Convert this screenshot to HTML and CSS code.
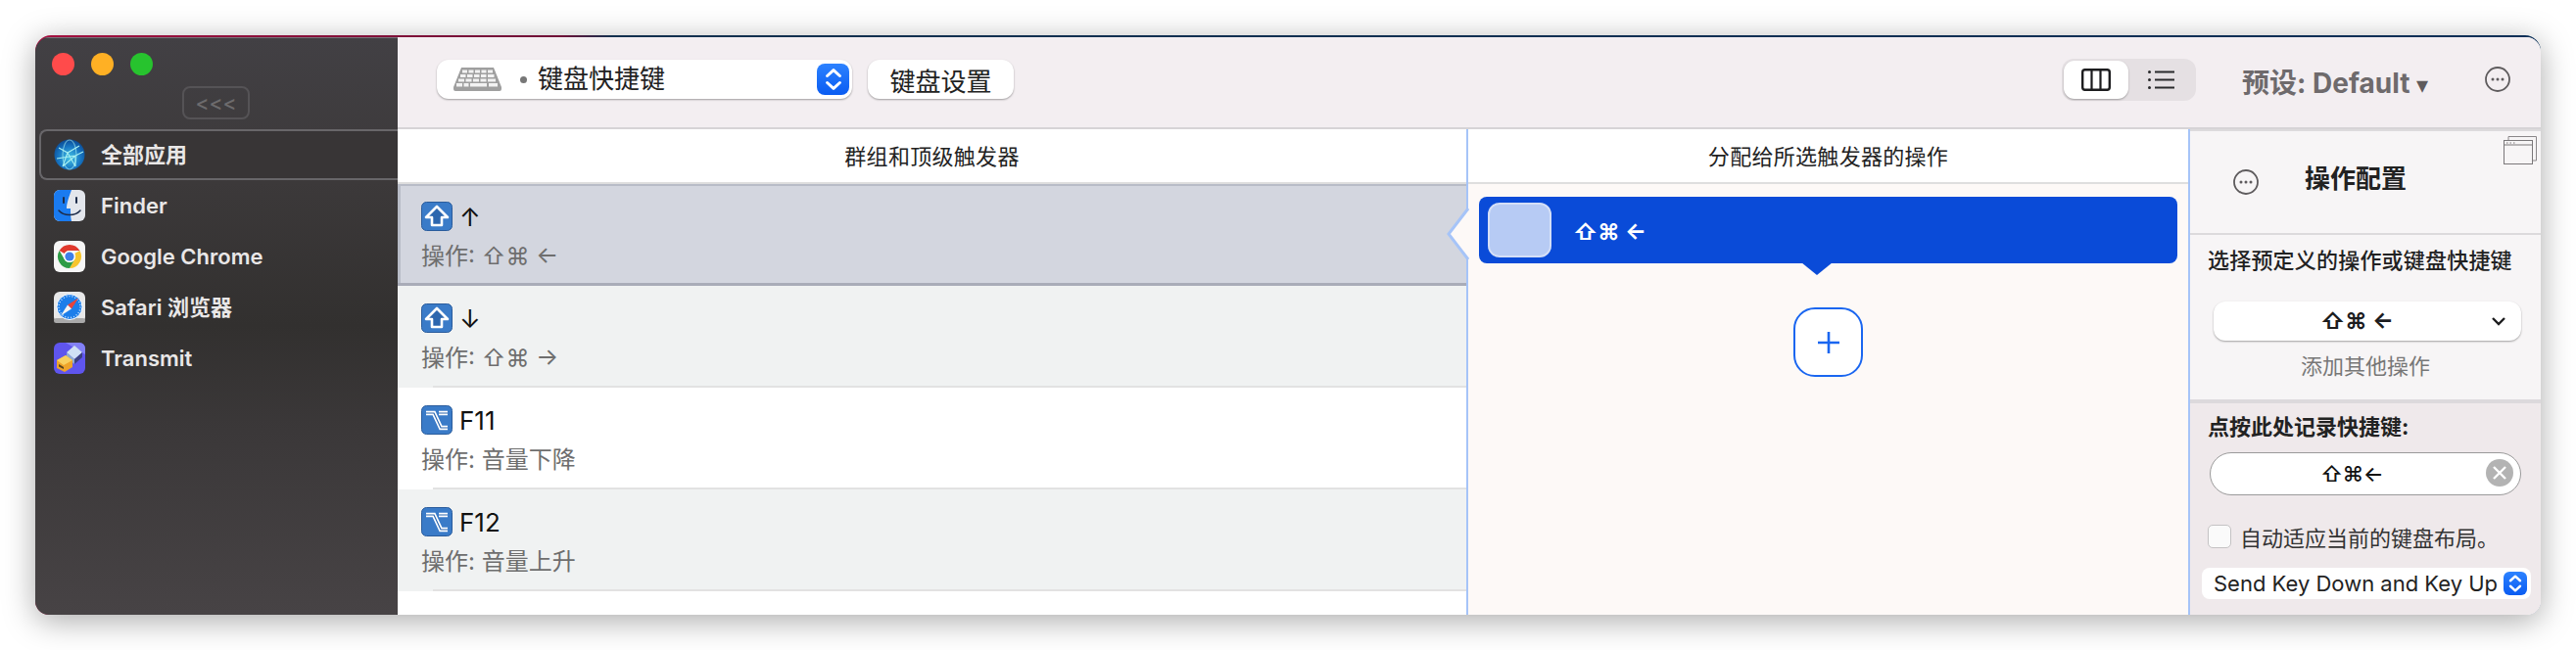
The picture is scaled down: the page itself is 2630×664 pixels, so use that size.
FILE: index.html
```html
<!DOCTYPE html>
<html lang="zh">
<head>
<meta charset="utf-8">
<title>键盘快捷键</title>
<link rel="stylesheet" href="styles.css">
</head>
<body>
<svg class="defs" width="0" height="0" aria-hidden="true">
  <defs>
    <radialGradient id="globeFill" cx="50%" cy="60%" r="60%"><stop offset="0" stop-color="#46c4e4"/><stop offset="0.6" stop-color="#1878c4"/><stop offset="1" stop-color="#0b4a94"/></radialGradient>
    <symbol id="dots" viewBox="0 0 26 26">
      <circle cx="13" cy="13" r="12" fill="none" stroke="#5e5b5d" stroke-width="1.800"/>
      <circle cx="8" cy="13" r="1.500" fill="#5e5b5d"/><circle cx="13" cy="13" r="1.500" fill="#5e5b5d"/><circle cx="18" cy="13" r="1.500" fill="#5e5b5d"/>
    </symbol>
    <symbol id="shiftKey" viewBox="0 0 32 30">
      <rect x="0.500" y="0.500" width="31" height="29" rx="5" fill="#3a7bc8" stroke="#2a5c9c"/>
      <path d="M16 5 L27 16 H21 V24 H11 V16 H5 Z" fill="#2c66ae" stroke="#fff" stroke-width="2.600" stroke-linejoin="round"/>
    </symbol>
    <symbol id="optKey" viewBox="0 0 32 30">
      <rect x="0.500" y="0.500" width="31" height="29" rx="5" fill="#3a7bc8" stroke="#2a5c9c"/>
      <path d="M5 8 H13 L20 23 H27 M18 8 H27" fill="none" stroke="#fff" stroke-width="4.400"/>
      <path d="M5 8 H13 L20 23 H27 M18 8 H27" fill="none" stroke="#2c66ae" stroke-width="1.200"/>
    </symbol>
    <symbol id="updown" viewBox="0 0 24 24">
      <path d="M6.500 9 L12 4 L17.500 9 M6.500 15 L12 20 L17.500 15" fill="none" stroke="#fff" stroke-width="2.600" stroke-linecap="round" stroke-linejoin="round"/>
    </symbol>
  </defs>
</svg>

<div class="window">
  <div class="frame">
    <aside class="sidebar">
      <div class="lights"><span class="light red"></span><span class="light amber"></span><span class="light green"></span></div>
      <div class="collapse-row"><span class="collapse">&lt;&lt;&lt;</span></div>
      <ul class="apps">
        <li class="app active">
          <svg class="app-icon" viewBox="0 0 32 32"><circle cx="16" cy="16" r="15.500" fill="url(#globeFill)"/><g fill="none" stroke="#a8f0f2" stroke-width="1.100"><path d="M5 9 L14 14 L26 7 M14 14 L22 28 M14 14 L9 28 M22 17 L3 20 M22 17 L30 13 M22 17 L22 28 M9 28 L22 17"/><ellipse cx="16" cy="16" rx="7" ry="15" stroke-opacity="0.6"/></g></svg>
          <span>全部应用</span>
        </li>
        <li class="app">
          <svg class="app-icon" viewBox="0 0 32 32"><rect width="32" height="32" rx="6" fill="#e3e6ec"/><path d="M6 0 H18 C15 8 13 14 13 19 H17 C17 24 17 28 18 32 H6 A6 6 0 0 1 0 26 V6 A6 6 0 0 1 6 0 Z" fill="#1a7bf0"/><path d="M10 8 V13 M23 8 V13" stroke="#1d2c4a" stroke-width="2" stroke-linecap="round"/><path d="M5 21 C10 27 22 27 27 21" fill="none" stroke="#1d2c4a" stroke-width="1.500" stroke-linecap="round"/></svg>
          <span>Finder</span>
        </li>
        <li class="app">
          <svg class="app-icon" viewBox="0 0 32 32"><rect width="32" height="32" rx="6" fill="#f6f6f6"/><path d="M16 4 A12 12 0 0 1 26.400 10 H16 A6 6 0 0 0 10.800 13 L5.600 10 A12 12 0 0 1 16 4 Z" fill="#e0392d"/><path d="M26.400 10 A12 12 0 0 1 16 28 L21.200 19 A6 6 0 0 0 21.200 13 Z" fill="#f7c52d"/><path d="M5.600 10 A12 12 0 0 0 16 28 L21.200 19 A6 6 0 0 1 10.800 19 Z" fill="#2e9c46"/><circle cx="16" cy="16" r="6" fill="#fff"/><circle cx="16" cy="16" r="4.600" fill="#3f7fe8"/></svg>
          <span>Google Chrome</span>
        </li>
        <li class="app">
          <svg class="app-icon" viewBox="0 0 32 32"><rect width="32" height="32" rx="6" fill="#e8e8e8"/><rect y="27" width="32" height="5" rx="2.500" fill="#a9a9a9"/><circle cx="16" cy="15.500" r="13" fill="#1c7eea" stroke="#fff"/><circle cx="16" cy="15.500" r="11" fill="none" stroke="#cfe4fb" stroke-width="1.500" stroke-dasharray="1 2"/><path d="M25 6.500 L14 13.500 L18 17.500 Z" fill="#e8433a"/><path d="M7 24.500 L14 13.500 L18 17.500 Z" fill="#f4f4f4"/></svg>
          <span>Safari 浏览器</span>
        </li>
        <li class="app">
          <svg class="app-icon" viewBox="0 0 32 32"><rect width="32" height="32" rx="6" fill="#5f55ee"/><path d="M6 0 H26 A6 6 0 0 1 32 6 V12 L12 0 Z" fill="#8280f6"/><path d="M13 10 L21 3 L29 10 L21 17 Z" fill="#d0e0f4"/><path d="M13 10 L21 17 V22 L13 15 Z" fill="#8fabd2"/><path d="M21 17 L29 10 V15 L21 22 Z" fill="#3c4180"/><path d="M3 18 L12 13 L19 18 V25 L11 30 L3 26 Z" fill="#eea42a"/><path d="M3 18 L12 13 L19 18 L10 23 Z" fill="#f8d060"/><path d="M5 22 L10 25 V27 L5 24.500 Z" fill="#5a4520"/></svg>
          <span>Transmit</span>
        </li>
      </ul>
    </aside>

    <main class="main">
      <header class="toolbar">
        <div class="picker">
          <svg class="kbd-icon" viewBox="0 0 49 24">
            <path d="M8 0 H41 L49 20 V22 A2 2 0 0 1 47 24 H2 A2 2 0 0 1 0 22 V20 Z" fill="#9f9f9f"/>
            <g fill="#f2f2f2">
              <rect x="9" y="2.500" width="5" height="3"/><rect x="15.500" y="2.500" width="5" height="3"/><rect x="22" y="2.500" width="5" height="3"/><rect x="28.500" y="2.500" width="5" height="3"/><rect x="35" y="2.500" width="5" height="3"/>
              <rect x="7" y="7" width="5.500" height="3"/><rect x="14" y="7" width="5.500" height="3"/><rect x="21" y="7" width="5.500" height="3"/><rect x="28" y="7" width="5.500" height="3"/><rect x="35" y="7" width="6.500" height="3"/>
              <rect x="5" y="11.500" width="6" height="3"/><rect x="12.500" y="11.500" width="6" height="3"/><rect x="20" y="11.500" width="6" height="3"/><rect x="27.500" y="11.500" width="6" height="3"/><rect x="35" y="11.500" width="8" height="3"/>
              <rect x="3" y="16" width="6" height="3.500"/><rect x="10.500" y="16" width="5" height="3.500"/><rect x="17" y="16" width="17" height="3.500"/><rect x="36" y="16" width="9" height="3.500"/>
            </g>
          </svg>
          <span class="picker-dot"></span>
          <span class="picker-label">键盘快捷键</span>
          <span class="stepper"><svg width="28" height="28"><use href="#updown"/></svg></span>
        </div>
        <button class="tool-btn">键盘设置</button>
        <div class="segment">
          <span class="seg seg-on">
            <svg width="30" height="23" viewBox="0 0 30 23"><rect x="1.200" y="1.200" width="27.600" height="20.600" rx="2.500" fill="none" stroke="#1c1c1e" stroke-width="2.400"/><path d="M10.500 1 V22 M19.500 1 V22" stroke="#1c1c1e" stroke-width="2.200"/></svg>
          </span>
          <span class="seg">
            <svg width="27" height="19" viewBox="0 0 27 19"><g fill="#2a2a2c"><circle cx="1.500" cy="1.500" r="1.500"/><circle cx="1.500" cy="9.500" r="1.500"/><circle cx="1.500" cy="17.500" r="1.500"/><rect x="7" y="0.500" width="20" height="2"/><rect x="7" y="8.500" width="20" height="2"/><rect x="7" y="16.500" width="20" height="2"/></g></svg>
          </span>
        </div>
        <div class="preset">预设: Default <span class="preset-caret">▾</span></div>
        <svg class="more" width="26" height="26"><use href="#dots"/></svg>
      </header>

      <div class="content">
        <section class="triggers">
          <h2 class="col-title">群组和顶级触发器</h2>
          <div class="row selected">
            <div class="row-title"><svg class="key" width="32" height="30"><use href="#shiftKey"/></svg><span>↑</span></div>
            <div class="row-sub">操作: ⇧⌘ ←</div>
          </div>
          <div class="row alt">
            <div class="row-title"><svg class="key" width="32" height="30"><use href="#shiftKey"/></svg><span>↓</span></div>
            <div class="row-sub">操作: ⇧⌘ →</div>
          </div>
          <div class="row">
            <div class="row-title"><svg class="key" width="32" height="30"><use href="#optKey"/></svg><span>F11</span></div>
            <div class="row-sub">操作: 音量下降</div>
          </div>
          <div class="row alt">
            <div class="row-title"><svg class="key" width="32" height="30"><use href="#optKey"/></svg><span>F12</span></div>
            <div class="row-sub">操作: 音量上升</div>
          </div>
        </section>

        <section class="actions">
          <h2 class="col-title">分配给所选触发器的操作</h2>
          <svg class="notch" width="24" height="54" viewBox="0 0 24 54"><path d="M23 1 L3 27 L23 53" fill="#fdf9f7" stroke="#a6c4f8" stroke-width="3"/></svg>
          <div class="action-wrap">
            <div class="action">
              <span class="action-thumb"></span>
              <span class="action-keys">⇧⌘ ←</span>
              <span class="action-tail"></span>
            </div>
            <button class="add" aria-label="添加"><svg width="24" height="24" viewBox="0 0 24 24"><path d="M12 1 V23 M1 12 H23" stroke="#1a66f0" stroke-width="2.600"/></svg></button>
          </div>
        </section>

        <aside class="config">
          <div class="config-head">
            <svg class="config-more" width="26" height="26"><use href="#dots"/></svg>
            <h3 class="config-title">操作配置</h3>
            <svg class="detach" width="34" height="29" viewBox="0 0 34 29"><path d="M5 4 V0.500 H33.500 V25 H29.500" fill="none" stroke="#8a8789"/><rect x="0.500" y="4.500" width="29" height="24" fill="#f7f5f6" stroke="#7a7779"/><path d="M0.500 9 H29.500" stroke="#7a7779"/><path d="M3 7 H4.500 M6.500 7 H8 M10 7 H11.500" stroke="#7a7779"/></svg>
          </div>
          <div class="config-select">
            <div class="section-label">选择预定义的操作或键盘快捷键</div>
            <div class="dropdown"><span class="dropdown-text">⇧⌘ ←</span><svg width="16" height="10" viewBox="0 0 16 10"><path d="M2 2 L8 8 L14 2" fill="none" stroke="#1c1c1e" stroke-width="2.400"/></svg></div>
            <div class="add-other">添加其他操作</div>
          </div>
          <div class="config-record">
            <div class="section-label strong">点按此处记录快捷键:</div>
            <div class="record"><span class="record-keys">⇧⌘←</span>
              <span class="clear"><svg width="16" height="16" viewBox="0 0 16 16"><path d="M2 2 L14 14 M14 2 L2 14" stroke="#fff" stroke-width="2.400"/></svg></span>
            </div>
            <label class="check-row"><span class="checkbox"></span><span>自动适应当前的键盘布局。</span></label>
            <div class="send"><span>Send Key Down and Key Up</span><span class="send-step"><svg width="22" height="22"><use href="#updown"/></svg></span></div>
          </div>
        </aside>
      </div>
    </main>
  </div>
</div>
</body>
</html>
```

FILE: styles.css
```css
* { box-sizing: border-box; }

html, body {
  margin: 0;
  height: 664px;
  overflow: hidden;
}

body {
  padding: 36px;
  background: #fff;
  font-family: Inter, "Noto Sans CJK SC", "DejaVu Sans", sans-serif;
  color: #1c1c1e;
}

.defs { display: block; height: 0; }

.window {
  width: 2558px;
  height: 592px;
  padding-top: 2px;
  border-radius: 16px 16px 14px 14px;
  background: linear-gradient(90deg, #a3103f 0, #6f1036 21%, #12304e 23%, #0c2f57 100%);
  box-shadow: 0 6px 32px rgba(0, 0, 0, 0.34);
}

.frame {
  display: grid;
  grid-template-columns: 370px 2188px;
  height: 590px;
  border-radius: 15px 15px 14px 14px;
  overflow: hidden;
}

/* sidebar */
.sidebar {
  background: linear-gradient(180deg, #424044 0, #3c393a 25%, #32302f 50%, #3b3839 68%, #474345 100%);
  box-shadow: inset 0 1px 0 #77757a;
}

.lights {
  display: flex;
  gap: 17px;
  padding: 16px 0 0 17px;
}

.light {
  width: 23px;
  height: 23px;
  border-radius: 50%;
}
.red { background: #ff4b4b; }
.amber { background: #ffb024; }
.green { background: #27c32e; }

.collapse-row {
  padding: 11px 0 0 150px;
}

.collapse {
  display: block;
  width: 69px;
  height: 34px;
  border: 2px solid #555356;
  border-radius: 8px;
  color: #6d6b6d;
  font-size: 21px;
  font-weight: 500;
  line-height: 32px;
  text-align: center;
}

.apps {
  list-style: none;
  margin: 10px 0 0;
  padding: 0;
}

.app {
  display: flex;
  align-items: center;
  gap: 16px;
  height: 52px;
  padding-left: 19px;
  color: #e9e7e7;
  font-size: 22px;
  font-weight: 600;
  line-height: 30px;
}

.app.active {
  margin-left: 4px;
  padding-left: 13px;
  border: 2px solid #686669;
  border-right: 0;
  border-radius: 8px 0 0 8px;
  background: #383536;
}

.app-icon {
  flex: none;
  width: 32px;
  height: 32px;
}

/* toolbar */
.main {
  display: flex;
  flex-direction: column;
  min-width: 0;
  background: #fff;
}

.toolbar {
  display: flex;
  align-items: center;
  height: 94px;
  padding: 0 0 6px 40px;
  background: #f3eef1;
  border-bottom: 2px solid #d6d3d6;
}

.picker {
  display: flex;
  align-items: center;
  width: 424px;
  height: 40px;
  padding: 0 3px 0 17px;
  border-radius: 12px;
  background: #fff;
  box-shadow: 0 1px 2px rgba(0, 0, 0, 0.35);
}

.kbd-icon {
  flex: none;
  width: 49px;
  height: 24px;
}

.picker-dot {
  width: 7px;
  height: 7px;
  margin-left: 19px;
  border-radius: 50%;
  background: #777;
}

.picker-label {
  flex: 1;
  margin-left: 11px;
  font-size: 26px;
  line-height: 40px;
  color: #222;
}

.stepper {
  display: flex;
  align-items: center;
  justify-content: center;
  width: 33px;
  height: 32px;
  border-radius: 8px;
  background: linear-gradient(#2c82ff, #0a5cf2);
}

.tool-btn {
  width: 149px;
  height: 40px;
  margin-left: 16px;
  padding: 0;
  border: 0;
  border-radius: 12px;
  background: #fff;
  box-shadow: 0 1px 2px rgba(0, 0, 0, 0.35);
  font: inherit;
  font-size: 26px;
  color: #222;
}

.segment {
  display: flex;
  width: 137px;
  height: 43px;
  margin-left: 1070px;
  padding: 2px;
  border-radius: 12px;
  background: #e5e0e3;
}

.seg {
  display: flex;
  align-items: center;
  justify-content: center;
  flex: 1;
}

.seg-on {
  flex: none;
  width: 66px;
  border-radius: 11px;
  background: #fff;
  box-shadow: 0 1px 2px rgba(0, 0, 0, 0.3);
}

.preset {
  width: 192px;
  margin: 3px 0 0 47px;
  color: #6e6a6c;
  font-size: 28px;
  font-weight: 700;
  white-space: nowrap;
}

.preset-caret {
  font-size: 24px;
  color: #5e5b5d;
}

.more { margin-left: 56px; }

/* three columns */
.content {
  flex: 1;
  display: grid;
  grid-template-columns: 1091px 737px 360px;
  min-height: 0;
}

.col-title {
  height: 56px;
  margin: 0;
  border-bottom: 2px solid #dedede;
  background: #fff;
  color: #222;
  font-size: 22px;
  font-weight: 400;
  letter-spacing: 0.3px;
  line-height: 56px;
  text-align: center;
}

.triggers { background: #fff; }

.row {
  position: relative;
  height: 104px;
  padding: 18px 0 0 24px;
  background: #fff;
}

.row::after {
  content: "";
  position: absolute;
  left: 36px;
  right: 0;
  bottom: 0;
  height: 2px;
  background: #e2e2e2;
}

.row.alt { background: #f0f2f2; }

.row.selected {
  background: #d3d6df;
  box-shadow: inset 3px 2px 0 #b8bcc7;
}
.row.selected::after {
  left: 0;
  height: 3px;
  background: #a9acb8;
}

.row-title {
  display: flex;
  align-items: center;
  gap: 7px;
  height: 30px;
  color: #111;
  font-size: 26px;
}

.key { flex: none; }

.row-sub {
  margin-top: 9px;
  color: #6e6e6e;
  font-size: 24px;
  line-height: 34px;
}

.actions {
  position: relative;
  border-left: 2px solid #a6c4f8;
  background: #fdf9f7;
}

.notch {
  position: absolute;
  left: -23px;
  top: 80px;
}

.action-wrap {
  padding: 13px 11px 0 11px;
}

.action {
  position: relative;
  display: flex;
  align-items: center;
  height: 68px;
  padding-left: 9px;
  border-radius: 8px;
  background: #0a4bd8;
}

.action-thumb {
  width: 65px;
  height: 56px;
  border: 2px solid #d4dff7;
  border-radius: 12px;
  background: #b7cbf4;
}

.action-keys {
  margin: 4px 0 0 22px;
  color: #fff;
  font-size: 23px;
  font-weight: 700;
}

.action-tail {
  position: absolute;
  left: 329px;
  top: 67px;
  width: 0;
  height: 0;
  border-left: 16px solid transparent;
  border-right: 16px solid transparent;
  border-top: 13px solid #0a4bd8;
}

.add {
  display: flex;
  align-items: center;
  justify-content: center;
  width: 71px;
  height: 71px;
  margin: 45px 0 0 321px;
  padding: 0;
  border: 2px solid #1a66f0;
  border-radius: 22px;
  background: #fff;
}

/* config panel */
.config {
  display: flex;
  flex-direction: column;
  border-left: 2px solid #a6c4f8;
  background: #f7f5f6;
}

.config-head {
  position: relative;
  display: flex;
  align-items: center;
  gap: 47px;
  height: 108px;
  padding-left: 44px;
  border-top: 2px solid #dcdadc;
  border-bottom: 2px solid #dcdadc;
}

.config-title {
  margin: 0 0 12px;
  color: #222;
  font-size: 26px;
  font-weight: 700;
}

.detach {
  position: absolute;
  right: 4px;
  top: 5px;
}

.config-select {
  height: 172px;
  border-bottom: 4px solid #dcd9dc;
}

.section-label {
  margin: 11px 0 0 18px;
  color: #222;
  font-size: 22px;
  font-weight: 500;
  letter-spacing: 0.2px;
  line-height: 30px;
}

.section-label.strong {
  margin-top: 9px;
  font-weight: 700;
  letter-spacing: 0;
}

.dropdown {
  display: flex;
  align-items: center;
  width: 314px;
  height: 40px;
  margin: 27px 0 0 24px;
  padding-right: 15px;
  border-radius: 12px;
  background: #fff;
  box-shadow: 0 1px 2px rgba(0, 0, 0, 0.35);
}

.dropdown-text {
  flex: 1;
  padding-left: 10px;
  font-size: 23px;
  font-weight: 700;
  text-align: center;
}

.add-other {
  margin-top: 11px;
  color: #777;
  font-size: 22px;
  line-height: 30px;
  text-align: center;
}

.config-record {
  flex: 1;
  background: #efe9eb;
}

.record {
  position: relative;
  display: flex;
  align-items: center;
  justify-content: center;
  width: 318px;
  height: 44px;
  margin: 11px 0 0 20px;
  padding-right: 28px;
  border: 1.5px solid #9a9a9a;
  border-radius: 22px;
  background: #fff;
}

.record-keys {
  font-size: 22px;
  font-weight: 500;
  letter-spacing: -0.6px;
  color: #111;
}

.clear {
  position: absolute;
  right: 7px;
  top: 6px;
  display: flex;
  align-items: center;
  justify-content: center;
  width: 28px;
  height: 28px;
  border-radius: 50%;
  background: #b3b3b3;
}

.check-row {
  display: flex;
  align-items: center;
  gap: 9px;
  height: 24px;
  margin: 30px 0 0 18px;
  color: #333;
  font-size: 22px;
}

.checkbox {
  width: 24px;
  height: 24px;
  border: 1px solid #c4c2c3;
  border-radius: 5px;
  background: #fafafa;
}

.send {
  display: flex;
  align-items: center;
  justify-content: space-between;
  width: 336px;
  height: 32px;
  margin: 20px 0 0 12px;
  padding: 0 4px 0 12px;
  border-radius: 8px;
  background: #fff;
  font-size: 22px;
  white-space: nowrap;
  color: #222;
}

.send-step {
  display: flex;
  align-items: center;
  justify-content: center;
  width: 24px;
  height: 24px;
  border-radius: 6px;
  background: linear-gradient(#2c82ff, #0a5cf2);
}
```
